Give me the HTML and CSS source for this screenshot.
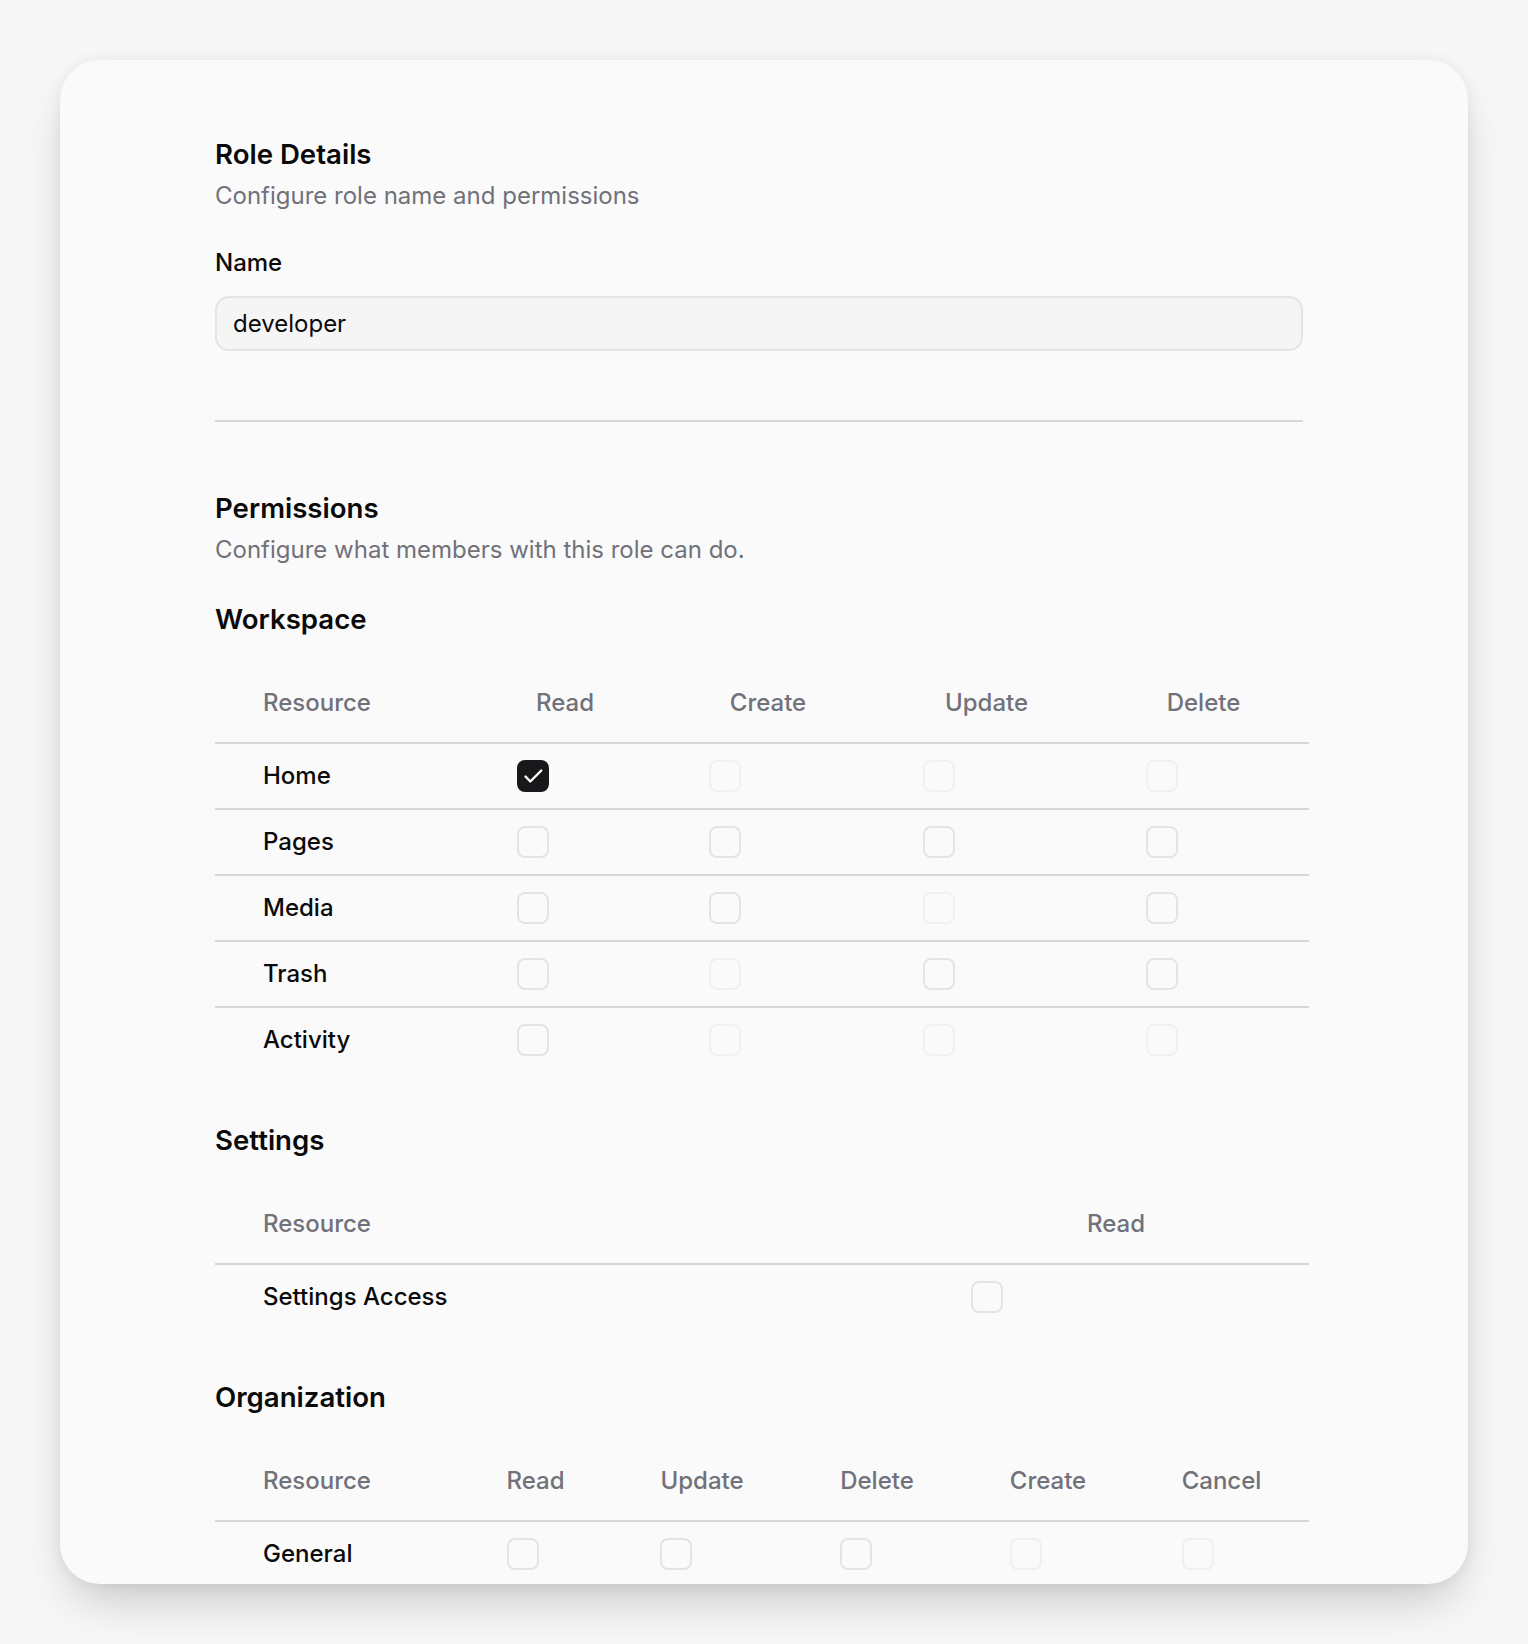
FILE: index.html
```html
<!DOCTYPE html>
<html lang="en">

<head>
    <meta charset="UTF-8">
    <meta name="viewport" content="width=device-width, initial-scale=1.0">
    <title>Role Details</title>
    <link rel="stylesheet" href="styles.css">
</head>

<body>

    <div class="card">
        <div class="card-body">

            <section class="details">
                <h2 class="section-title">Role Details</h2>
                <p class="section-desc">Configure role name and permissions</p>
                <label class="field-label" for="roleName">Name</label>
                <input class="text-input" type="text" id="roleName" value="developer">
            </section>

            <hr class="divider">

            <section class="permissions">
                <h2 class="section-title">Permissions</h2>
                <p class="section-desc">Configure what members with this role can do.</p>

                <div class="group">
                    <h3 class="group-title">Workspace</h3>
                    <table class="perm-table">
                        <colgroup>
                            <col class="ws-res">
                            <col class="ws-read">
                            <col class="ws-create">
                            <col class="ws-update">
                            <col class="ws-delete">
                        </colgroup>
                        <thead>
                            <tr>
                                <th>Resource</th>
                                <th>Read</th>
                                <th>Create</th>
                                <th>Update</th>
                                <th>Delete</th>
                            </tr>
                        </thead>
                        <tbody>
                            <tr>
                                <td>Home</td>
                                <td><span class="check checked"><svg viewBox="2 2 28 28" fill="none" stroke="currentColor" stroke-width="2.4" stroke-linecap="round" stroke-linejoin="round"><path d="M8.5 16.5l4.8 5 11-11"/></svg></span></td>
                                <td><span class="check disabled"></span></td>
                                <td><span class="check disabled"></span></td>
                                <td><span class="check disabled"></span></td>
                            </tr>
                            <tr>
                                <td>Pages</td>
                                <td><span class="check"></span></td>
                                <td><span class="check"></span></td>
                                <td><span class="check"></span></td>
                                <td><span class="check"></span></td>
                            </tr>
                            <tr>
                                <td>Media</td>
                                <td><span class="check"></span></td>
                                <td><span class="check"></span></td>
                                <td><span class="check disabled"></span></td>
                                <td><span class="check"></span></td>
                            </tr>
                            <tr>
                                <td>Trash</td>
                                <td><span class="check"></span></td>
                                <td><span class="check disabled"></span></td>
                                <td><span class="check"></span></td>
                                <td><span class="check"></span></td>
                            </tr>
                            <tr>
                                <td>Activity</td>
                                <td><span class="check"></span></td>
                                <td><span class="check disabled"></span></td>
                                <td><span class="check disabled"></span></td>
                                <td><span class="check disabled"></span></td>
                            </tr>
                        </tbody>
                    </table>
                </div>

                <div class="group">
                    <h3 class="group-title">Settings</h3>
                    <table class="perm-table">
                        <colgroup>
                            <col class="st-res">
                            <col class="st-read">
                        </colgroup>
                        <thead>
                            <tr>
                                <th>Resource</th>
                                <th>Read</th>
                            </tr>
                        </thead>
                        <tbody>
                            <tr>
                                <td>Settings Access</td>
                                <td><span class="check"></span></td>
                            </tr>
                        </tbody>
                    </table>
                </div>

                <div class="group">
                    <h3 class="group-title">Organization</h3>
                    <table class="perm-table">
                        <colgroup>
                            <col class="org-res">
                            <col class="org-read">
                            <col class="org-update">
                            <col class="org-delete">
                            <col class="org-create">
                            <col class="org-cancel">
                        </colgroup>
                        <thead>
                            <tr>
                                <th>Resource</th>
                                <th>Read</th>
                                <th>Update</th>
                                <th>Delete</th>
                                <th>Create</th>
                                <th>Cancel</th>
                            </tr>
                        </thead>
                        <tbody>
                            <tr>
                                <td>General</td>
                                <td><span class="check"></span></td>
                                <td><span class="check"></span></td>
                                <td><span class="check"></span></td>
                                <td><span class="check disabled"></span></td>
                                <td><span class="check disabled"></span></td>
                            </tr>
                        </tbody>
                    </table>
                </div>
            </section>

        </div>
    </div>

</body>

</html>
```

FILE: styles.css
```css
html,
body {
    height: 100%;
}

body {
    font-family: 'Inter', 'Liberation Sans', sans-serif;
    margin: 0;
    padding: 60px;
    box-sizing: border-box;
    background-color: #f7f7f7;
    color: #0a0a0a;
}

.card {
    height: 100%;
    background-color: #fafafa;
    border-radius: 40px;
    overflow: hidden;
    box-shadow: 0 24px 48px -12px rgba(0, 0, 0, 0.22), 0 0 14px rgba(0, 0, 0, 0.06);
}

.card-body {
    padding: 76px 165px 0 155px;
}

.section-title {
    margin: 0;
    font-size: 27.6px;
    line-height: 36px;
    font-weight: 600;
}

.section-desc {
    margin: 8px 0 0;
    font-size: 24px;
    line-height: 32px;
    color: #71717a;
}

.field-label {
    display: block;
    margin-top: 35px;
    font-size: 24px;
    line-height: 32px;
    font-weight: 500;
}

.text-input {
    display: block;
    box-sizing: border-box;
    width: 100%;
    height: 55px;
    margin-top: 17px;
    padding: 0 16px;
    border: 2px solid #e4e4e4;
    border-radius: 14px;
    background-color: #f5f5f5;
    font-family: inherit;
    font-size: 24px;
    color: #0a0a0a;
    outline: none;
}

.divider {
    margin: 69px 0 68px;
    border: none;
    border-top: 2px solid #d6d6d6;
}

.group {
    margin-top: 35px;
}

.group + .group {
    margin-top: 50px;
}

.group-title {
    margin: 0 0 27px;
    font-size: 27.6px;
    line-height: 36px;
    font-weight: 600;
}

.perm-table {
    width: calc(100% + 6px);
    table-layout: fixed;
    border-collapse: separate;
    border-spacing: 0;
    font-size: 24px;
}

.perm-table th {
    padding: 23px 0;
    line-height: 32px;
    font-weight: 500;
    color: #71717a;
    text-align: center;
    border-bottom: 2px solid #d6d6d6;
}

.perm-table th:first-child {
    text-align: left;
    padding-left: 48px;
}

.perm-table td {
    padding: 16px 0 16px 48px;
    line-height: 32px;
    font-weight: 500;
    border-bottom: 2px solid #d6d6d6;
}

.perm-table tbody tr:last-child td {
    border-bottom: none;
}

.ws-res { width: 254px; }
.ws-read { width: 192px; }
.ws-create { width: 214px; }
.ws-update { width: 223px; }
.ws-delete { width: 211px; }

.st-res { width: 708px; }
.st-read { width: 386px; }

.org-res { width: 244px; }
.org-read { width: 153px; }
.org-update { width: 180px; }
.org-delete { width: 170px; }
.org-create { width: 172px; }
.org-cancel { width: 175px; }

.check {
    display: block;
    box-sizing: border-box;
    width: 32px;
    height: 32px;
    border: 2px solid #e4e4e4;
    border-radius: 8px;
    background-color: #fafafa;
}

.check.disabled {
    border-color: #f0f0f0;
}

.check.checked {
    border-color: #18181b;
    background-color: #18181b;
    color: white;
}

.check svg {
    display: block;
    width: 28px;
    height: 28px;
}
```
